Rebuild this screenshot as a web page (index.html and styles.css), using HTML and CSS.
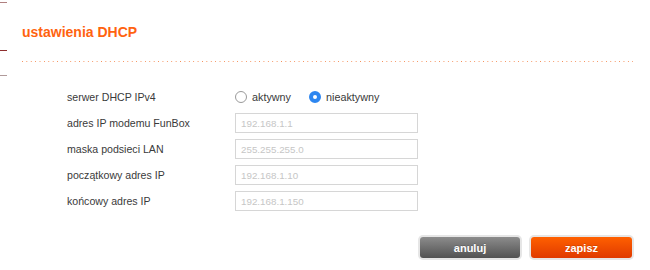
FILE: index.html
```html
<!DOCTYPE html>
<html lang="pl">
<head>
<meta charset="utf-8">
<title>ustawienia DHCP</title>
<link rel="stylesheet" href="styles.css">
</head>
<body>
<div class="page">
  <div class="edge">
    <span class="mark mark-top"></span>
    <span class="mark mark-mid"></span>
    <span class="mark mark-low"></span>
  </div>
  <div class="main">
    <h1 class="title">ustawienia DHCP</h1>
    <div class="dots"></div>
    <div class="form">
      <div class="row">
        <span class="label">serwer DHCP IPv4</span>
        <div class="value radios">
          <label class="radio"><span class="circle"></span>aktywny</label>
          <label class="radio"><span class="circle checked"></span>nieaktywny</label>
        </div>
      </div>
      <div class="row">
        <span class="label">adres IP modemu FunBox</span>
        <div class="value"><input class="field" type="text" placeholder="192.168.1.1"></div>
      </div>
      <div class="row">
        <span class="label">maska podsieci LAN</span>
        <div class="value"><input class="field" type="text" placeholder="255.255.255.0"></div>
      </div>
      <div class="row">
        <span class="label">początkowy adres IP</span>
        <div class="value"><input class="field" type="text" placeholder="192.168.1.10"></div>
      </div>
      <div class="row">
        <span class="label">końcowy adres IP</span>
        <div class="value"><input class="field" type="text" placeholder="192.168.1.150"></div>
      </div>
    </div>
    <div class="actions">
      <button class="btn btn-cancel" type="button">anuluj</button>
      <button class="btn btn-save" type="button">zapisz</button>
    </div>
  </div>
</div>
</body>
</html>
```
FILE: styles.css
```css
html, body {
  margin: 0;
  padding: 0;
  background: #ffffff;
}
body {
  font-family: "Liberation Sans", Arial, Helvetica, sans-serif;
  width: 650px;
  height: 270px;
  overflow: hidden;
}
.page {
  display: flex;
  height: 270px;
}
.edge {
  width: 7px;
  display: flex;
  flex-direction: column;
}
.mark {
  display: block;
  width: 7px;
  height: 1px;
}
.mark-top {
  margin-top: 2px;
  background: #b08080;
}
.mark-mid {
  margin-top: 47px;
  background: #8e2f2f;
}
.mark-low {
  margin-top: 24px;
  background: #b09a9a;
}
.main {
  margin-left: 15px;
  width: 611px;
  display: flex;
  flex-direction: column;
}
.title {
  margin: 24px 0 0 0;
  font-size: 14px;
  line-height: 16px;
  font-weight: bold;
  color: #ff6310;
}
.dots {
  margin-top: 21px;
  height: 1px;
  background-image: linear-gradient(to right, #f58d55 0, #f58d55 1px, transparent 1px);
  background-size: 4.4px 1px;
  background-repeat: repeat-x;
}
.form {
  margin-top: 25px;
  padding-left: 45px;
  display: flex;
  flex-direction: column;
  gap: 6px;
}
.row {
  display: flex;
  align-items: center;
  height: 20px;
}
.label {
  width: 168px;
  font-size: 10.6px;
  color: #3a3a3a;
}
.value {
  display: flex;
  align-items: center;
}
.radios {
  gap: 18px;
}
.radio {
  display: flex;
  align-items: center;
  gap: 5px;
  font-size: 10.8px;
  color: #3a3a3a;
}
.circle {
  box-sizing: border-box;
  width: 12px;
  height: 12px;
  border-radius: 50%;
  border: 1px solid #9a9a9a;
  background: #ffffff;
}
.circle.checked {
  border: 4px solid #2d86f0;
  background: #ffffff;
}
.field {
  box-sizing: border-box;
  width: 183px;
  height: 20px;
  margin: 0;
  padding: 0 0 0 5px;
  border: 1px solid #d6d6d6;
  border-radius: 0;
  outline: none;
  font-family: "Liberation Sans", Arial, Helvetica, sans-serif;
  font-size: 9.8px;
  color: #555;
  background: #fff;
}
.field::placeholder {
  color: #c6c6c6;
}
.actions {
  margin-top: 26px;
  display: flex;
  justify-content: flex-end;
  gap: 11px;
  padding-right: 1px;
}
.btn {
  width: 100px;
  height: 21px;
  padding: 0;
  border: none;
  border-radius: 3px;
  box-shadow: 0 0 0 2px #e6e6e6;
  font-family: "Liberation Sans", Arial, Helvetica, sans-serif;
  font-size: 11px;
  font-weight: bold;
  color: #ffffff;
  text-shadow: 0 -1px 0 rgba(0, 0, 0, 0.15);
  cursor: pointer;
}
.btn-cancel {
  background: linear-gradient(to bottom, #8c8c8c, #525252);
}
.btn-save {
  width: 101px;
  background: linear-gradient(to bottom, #ff6000, #e03a00);
}
```
